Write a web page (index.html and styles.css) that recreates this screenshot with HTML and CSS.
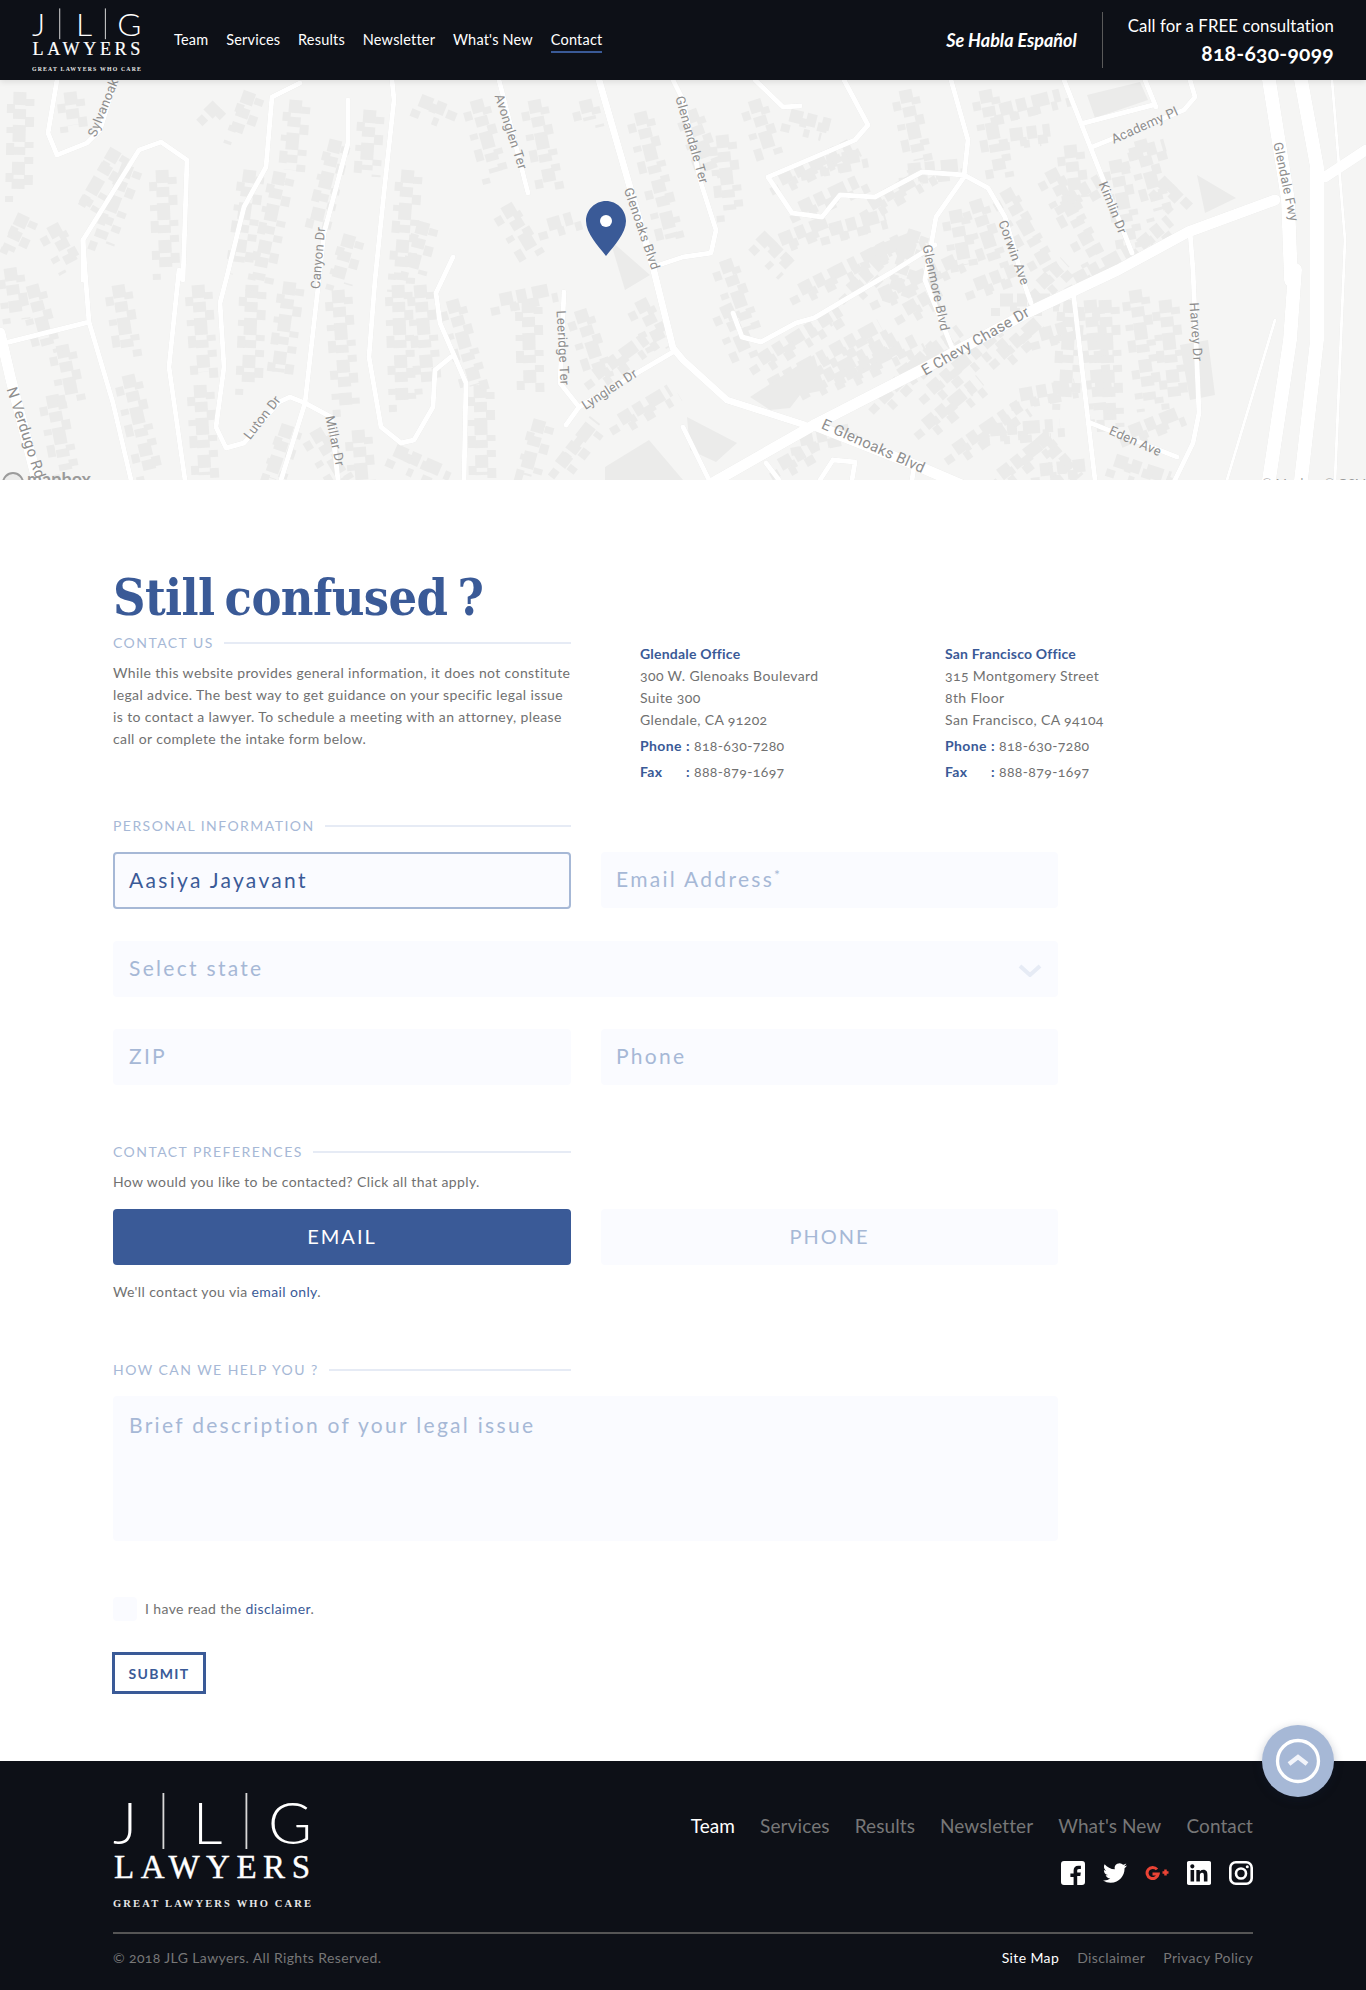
FILE: index.html
```html
<!DOCTYPE html>
<html lang="en">
<head>
<meta charset="utf-8">
<title>Contact | JLG Lawyers</title>
<link rel="stylesheet" href="styles.css">
</head>
<body>
<header class="site-header">
  <a class="header-logo" href="#">
    <svg class="logo-small" viewBox="0 -8 200 126">
      <text class="logo-mark" x="0" y="51">J</text>
      <rect class="logo-bar" x="49.500" y="0" width="1.800" height="56"/>
      <text class="logo-mark" x="80" y="51">L</text>
      <rect class="logo-bar" x="132.500" y="0" width="1.800" height="56"/>
      <text class="logo-mark" x="155" y="51" textLength="44" lengthAdjust="spacingAndGlyphs">G</text>
      <text class="logo-word" x="1" y="85" textLength="196">LAWYERS</text>
      <text class="logo-tag" x="0" y="114" textLength="198">GREAT LAWYERS WHO CARE</text>
    </svg>
  </a>
  <nav class="main-nav">
    <a href="#">Team</a>
    <a href="#">Services</a>
    <a href="#">Results</a>
    <a href="#">Newsletter</a>
    <a href="#">What's New</a>
    <a href="#" class="active">Contact</a>
  </nav>
  <div class="header-right">
    <span class="habla">Se Habla Español</span>
    <div class="call">
      <span class="call-text">Call for a FREE consultation</span>
      <strong class="call-phone">818-630-9099</strong>
    </div>
  </div>
</header>

<section class="map">
  <svg class="map-svg" viewBox="0 80 1366 400" width="1366" height="400">
    <g class="blds">
      <g id="rows">
        <path d="M20 92L18 190M70 92L74 125M116 150L84 205M24 215L8 250M52 225L72 262M10 268L16 312M128 165L100 238M162 170L166 270M208 105L218 115M250 92L236 132M250 170L238 262M296 100L290 170M280 172L258 280M336 140L316 222M350 235L338 278M370 110L366 170M420 100L450 112M408 170L400 280M424 222L412 268M476 100L496 172M534 100L550 182M506 205L534 252M548 225L572 218M640 112L672 238M585 100L590 120"/>
        <path d="M32 285L48 345M62 345L72 395M118 285L128 350M128 375L150 470M52 395L66 470M198 285L204 372M200 385L205 475M252 285L248 385M290 282L278 372M288 425L270 478M315 430L345 480M338 290L346 405M358 430L362 480M398 285L402 400M420 285L428 385M452 300L476 385M480 385L482 475M395 450L440 470M500 300L548 290M528 300L530 385M580 310L600 370M595 375L650 335M640 300L660 340M540 420L525 475M560 465L595 420M620 420L670 390"/>
        <path d="M690 110L712 170M722 135L730 210M754 100L770 150M790 115L830 125M780 180L850 145M810 165L862 155M905 90L920 160M908 170L960 165M800 208L860 180M870 205L930 170M760 235L790 265M725 260L750 330M780 240L830 220M830 230L885 215M800 290L900 240M870 255L920 235M895 290L915 230M850 290L880 262"/>
        <path d="M985 90L1000 170M1000 110L1060 95M1010 135L1050 130M1005 190L1050 270M1050 170L1095 255M1070 145L1075 190M955 210L965 265M975 200L995 260M1065 200L1100 180M1130 155L1165 145M1115 160L1130 240M1140 140L1160 210M1160 180L1180 200M1075 280L1130 250M1140 245L1170 220"/>
        <path d="M725 305L745 350M760 360L840 310M770 385L880 325M880 295L955 260M810 385L900 335M905 310L940 290M845 375L915 340M900 375L960 330M975 285L1015 270M1000 300L1060 300M1040 285L1065 262M1090 300L1100 410M1105 300L1110 420M1135 290L1150 400M1165 300L1175 400"/>
        <path d="M880 400L935 345M930 390L1000 330M955 450L1020 405M1000 355L1040 320M1020 395L1075 385M1040 335L1075 325M1070 300L1065 400M990 430L1060 425M1000 475L1045 440M1040 435L1070 470M1130 432L1180 412M1115 460L1170 478M800 440L850 430M780 465L815 445M925 425L980 380M1040 470L1085 465"/>
      </g>
      <use class="rows-b" href="#rows" x="10" y="7"/>
      <use class="rows-c" href="#rows" x="-9" y="12"/>
    </g>
    <path class="bld-block" d="M1087 95L1140 82L1148 100L1095 118ZM1197 175L1236 198L1205 213ZM750 397L814 355L825 390L800 395L790 408L770 410ZM687 417L737 443L716 462L690 450ZM605 467L649 440L683 480L605 480ZM1180 345L1208 340L1215 395L1190 400ZM610 240L650 275L625 290Z"/>
    <g class="roads">
      <path d="M57 80L48 133L57 155L87 143L100 130L115 82"/>
      <path d="M83 280V240L139 150L161 142L187 160L183 280L179 270L169 367L185 480"/>
      <path d="M83 240L85 270L89 322L113 403L131 480M89 322L9 342"/>
      <path d="M300 83L272 97L266 167L244 207L226 280L220 303L224 367L216 427L226 448L244 443L279 402L290 397L305 403L331 417L338 480"/>
      <path d="M348 100V143L324 233L320 270L305 403L281 480"/>
      <path d="M392 80L394 100L385 183L375 280L369 357L381 427L401 443L414 440L433 407L435 370L451 357"/>
      <path d="M453 257L436 293L440 323L466 383L464 480"/>
      <path d="M499 80L528 193M564 292L560 383L579 407L566 425M579 407L673 352"/>
      <path class="road-mid" d="M599 80L653 267L673 348L683 360L727 400L805 425"/>
      <path d="M653 267L683 257L711 253L716 230L700 180L683 100L673 80"/>
      <path d="M755 80L783 107L800 106M844 80L868 125L855 140L768 177L792 213L822 217L840 195L875 197L922 172L964 175L988 188L1005 217L1023 280L1031 303M951 80L968 140L964 177L936 217L925 280L953 350"/>
      <path d="M733 313L742 337L761 342L796 323L814 318L892 272L935 245M1064 80L1132 253M1092 147L1184 110L1195 97L1190 80M1084 123L1153 105M1145 80L1156 107"/>
      <path d="M1073 290L1088 420L1095 480M1088 422L1177 457M1190 232L1193 270L1199 413L1193 443L1175 480M683 427L709 480M766 463L779 480M833 460L855 462L852 480M820 480L833 460M914 467L912 480"/>
      <path class="road-wide" d="M700 490L814 425L927 367L1027 313L1118 270L1188 232L1275 200M1325 177L1366 150"/>
      <path class="road-wide" d="M0 333L11 380L37 480M814 425L920 467L962 485"/>
      <path class="road-fwy" d="M1269 80L1288 200L1291 280L1295 270L1290 340L1269 480"/>
      <path class="road-fwy" d="M1301 80L1317 167V340L1301 480"/>
      <path class="road-thin" d="M1332 80L1345 240L1335 480M1275 320L1227 480"/>
    </g>
    <g class="map-labels">
      <text transform="translate(104 108) rotate(-68)">Sylvanoak</text>
      <text transform="translate(510 132) rotate(72)">Avonglen Ter</text>
      <text transform="translate(319 258) rotate(-85)">Canyon Dr</text>
      <text transform="translate(641 229) rotate(71)">Glenoaks Blvd</text>
      <text transform="translate(691 140) rotate(74)">Glenandale Ter</text>
      <text transform="translate(1145 126) rotate(-24)">Academy Pl</text>
      <text transform="translate(1112 208) rotate(68)">Kimlin Dr</text>
      <text transform="translate(1013 253) rotate(70)">Corwin Ave</text>
      <text transform="translate(935 288) rotate(78)">Glenmore Blvd</text>
      <text transform="translate(1285 182) rotate(78)">Glendale Fwy</text>
      <text class="label-lg" transform="translate(976 342) rotate(-30)">E Chevy Chase Dr</text>
      <text class="label-lg" transform="translate(873 447) rotate(24)">E Glenoaks Blvd</text>
      <text transform="translate(1195 332) rotate(86)">Harvey Dr</text>
      <text transform="translate(1135 442) rotate(24)">Eden Ave</text>
      <text transform="translate(263 418) rotate(-52)">Luton Dr</text>
      <text transform="translate(334 441) rotate(78)">Millar Dr</text>
      <text transform="translate(562 348) rotate(87)">Leeridge Ter</text>
      <text transform="translate(610 390) rotate(-33)">Lynglen Dr</text>
      <text class="label-lg" transform="translate(25 433) rotate(72)">N Verdugo Rd</text>
    </g>
    <circle class="mapbox-ring" cx="13" cy="483" r="10"/>
    <text class="mapbox-word" x="27" y="486">mapbox</text>
    <text class="map-credit" x="1262" y="487">© Mapbox © OSM</text>
    <path class="map-pin" d="M606 201C617 201 626 210 626 221C626 233 614 246 606 256C598 246 586 233 586 221C586 210 595 201 606 201Z"/>
    <circle class="map-pin-dot" cx="606" cy="221" r="6"/>
  </svg>
</section>

<main class="content">
  <h1 class="page-title">Still confused ?</h1>

  <div class="intro">
    <div class="intro-text">
      <h2 class="section-label"><span>CONTACT US</span></h2>
      <p class="lead">While this website provides general information, it does not constitute legal advice. The best way to get guidance on your specific legal issue is to contact a lawyer. To schedule a meeting with an attorney, please call or complete the intake form below.</p>
    </div>
    <address class="office">
      <h3>Glendale Office</h3>
      <p>300 W. Glenoaks Boulevard</p>
      <p>Suite 300</p>
      <p>Glendale, CA 91202</p>
      <p class="office-line"><span class="office-key">Phone</span><b>:</b> 818-630-7280</p>
      <p class="office-line"><span class="office-key">Fax</span><b>:</b> 888-879-1697</p>
    </address>
    <address class="office">
      <h3>San Francisco Office</h3>
      <p>315 Montgomery Street</p>
      <p>8th Floor</p>
      <p>San Francisco, CA 94104</p>
      <p class="office-line"><span class="office-key">Phone</span><b>:</b> 818-630-7280</p>
      <p class="office-line"><span class="office-key">Fax</span><b>:</b> 888-879-1697</p>
    </address>
  </div>

  <form class="intake">
    <h2 class="section-label half"><span>PERSONAL INFORMATION</span></h2>
    <div class="field-grid">
      <div class="field filled">Aasiya Jayavant</div>
      <div class="field">Email Address<sup>*</sup></div>
      <div class="field wide">Select state
        <svg class="chevron" width="24" height="13" viewBox="0 0 24 13"><path d="M2 2L12 11L22 2"/></svg>
      </div>
      <div class="field">ZIP</div>
      <div class="field">Phone</div>
    </div>

    <h2 class="section-label half group"><span>CONTACT PREFERENCES</span></h2>
    <p class="help">How would you like to be contacted? Click all that apply.</p>
    <div class="choice-grid">
      <div class="choice selected">EMAIL</div>
      <div class="choice">PHONE</div>
    </div>
    <p class="note">We'll contact you via <a href="#">email only</a>.</p>

    <h2 class="section-label half group"><span>HOW CAN WE HELP YOU ?</span></h2>
    <div class="field message">Brief description of your legal issue</div>

    <label class="agree"><span class="box"></span><span>I have read the <a href="#">disclaimer</a>.</span></label>
    <button class="submit" type="button">SUBMIT</button>
  </form>
</main>

<footer class="site-footer">
  <a class="to-top" href="#">
    <svg width="48" height="48" viewBox="0 0 48 48"><circle class="top-ring" cx="24" cy="24" r="20.500"/><path class="top-chev" d="M15 27L24 20L33 27"/></svg>
  </a>
  <div class="footer-top">
    <svg class="logo-large" viewBox="0 -8 200 126">
      <text class="logo-mark" x="0" y="51">J</text>
      <rect class="logo-bar" x="49.500" y="0" width="1.800" height="56"/>
      <text class="logo-mark" x="80" y="51">L</text>
      <rect class="logo-bar" x="132.500" y="0" width="1.800" height="56"/>
      <text class="logo-mark" x="155" y="51" textLength="44" lengthAdjust="spacingAndGlyphs">G</text>
      <text class="logo-word" x="1" y="85" textLength="196">LAWYERS</text>
      <text class="logo-tag" x="0" y="114" textLength="198">GREAT LAWYERS WHO CARE</text>
    </svg>
    <div class="footer-links">
      <nav class="footer-nav">
        <a href="#" class="current">Team</a>
        <a href="#">Services</a>
        <a href="#">Results</a>
        <a href="#">Newsletter</a>
        <a href="#">What's New</a>
        <a href="#">Contact</a>
      </nav>
      <div class="social">
        <svg viewBox="0 0 24 24" width="24" height="24"><path class="ico" d="M3 0h18a3 3 0 0 1 3 3v18a3 3 0 0 1-3 3h-4.800v-9h3.100l.5-3.600h-3.600V9.800c0-1 .3-1.800 1.800-1.800h1.900V4.800c-.3 0-1.500-.1-2.700-.1-2.700 0-4.600 1.700-4.600 4.700v3H9.400V16h3.200v8H3a3 3 0 0 1-3-3V3a3 3 0 0 1 3-3z"/></svg>
        <svg viewBox="0 0 24 24" width="24" height="24"><path class="ico" d="M23.953 4.570a10 10 0 01-2.825.775 4.958 4.958 0 002.163-2.723c-.951.555-2.005.959-3.127 1.184a4.920 4.920 0 00-8.384 4.482C7.690 8.095 4.067 6.130 1.640 3.162a4.822 4.822 0 00-.666 2.475c0 1.710.870 3.213 2.188 4.096a4.904 4.904 0 01-2.228-.616v.060a4.923 4.923 0 003.946 4.827 4.996 4.996 0 01-2.212.085 4.936 4.936 0 004.604 3.417 9.867 9.867 0 01-6.102 2.105c-.390 0-.779-.023-1.170-.067a13.995 13.995 0 007.557 2.209c9.053 0 13.998-7.496 13.998-13.985 0-.210 0-.420-.015-.630A9.935 9.935 0 0024 4.590z"/></svg>
        <svg viewBox="0 0 24 24" width="24" height="24"><path class="gplus" d="M12 8.400A5.600 5.600 0 1 0 13.200 13H7.500"/><path class="gplus-plus" d="M20.500 8.500v6M17.500 11.500h6"/></svg>
        <svg viewBox="0 0 24 24" width="24" height="24"><path class="ico" d="M20.447 20.452h-3.554v-5.569c0-1.328-.027-3.037-1.852-3.037-1.853 0-2.136 1.445-2.136 2.939v5.667H9.351V9h3.414v1.561h.046c.477-.9 1.637-1.850 3.370-1.850 3.601 0 4.267 2.370 4.267 5.455v6.286zM5.337 7.433c-1.144 0-2.063-.926-2.063-2.065 0-1.138.92-2.063 2.063-2.063 1.140 0 2.064.925 2.064 2.063 0 1.139-.925 2.065-2.064 2.065zm1.782 13.019H3.555V9h3.564v11.452zM22.225 0H1.771C.792 0 0 .774 0 1.729v20.542C0 23.227.792 24 1.771 24h20.451C23.200 24 24 23.227 24 22.271V1.729C24 .774 23.200 0 22.222 0h.003z"/></svg>
        <svg viewBox="0 0 24 24" width="24" height="24"><rect class="insta" x="1.300" y="1.300" width="21.400" height="21.400" rx="5.500"/><circle class="insta" cx="12" cy="12.500" r="5"/><circle class="ico" cx="18.300" cy="5.700" r="1.500"/></svg>
      </div>
    </div>
  </div>
  <div class="footer-bottom">
    <span class="copyright">© 2018 JLG Lawyers. All Rights Reserved.</span>
    <nav class="legal">
      <a href="#" class="current">Site Map</a>
      <a href="#">Disclaimer</a>
      <a href="#">Privacy Policy</a>
    </nav>
  </div>
</footer>
</body>
</html>
```
FILE: styles.css
```css
* { box-sizing: border-box; }
html, body { margin: 0; padding: 0; }
body {
  background: #fff;
  color: #717171;
  font-family: "Lato", "Open Sans", sans-serif;
  font-size: 14px;
  letter-spacing: .38px;
  line-height: 22px;
  font-variant-numeric: oldstyle-nums;
  font-feature-settings: "onum" 1;
}
a { color: inherit; text-decoration: none; }
h1, h2, h3, p, address { margin: 0; font-style: normal; }

/* logo */
.logo-mark { fill: #fff; font-family: "Lato", sans-serif; font-weight: 300; font-size: 58px; letter-spacing: 0; }
.logo-bar { fill: #d8d8d8; }
.logo-word { fill: #fff; stroke: #fff; stroke-width: .4px; font-family: "Liberation Serif", serif; font-size: 33px; letter-spacing: 0; }
.logo-tag { fill: #e8e8e8; font-family: "Liberation Serif", serif; font-weight: 700; font-size: 10.500px; letter-spacing: 0; }

/* header */
.site-header {
  position: relative;
  z-index: 2;
  display: flex;
  align-items: center;
  height: 80px;
  padding: 0 32px;
  background: #0d1017;
  box-shadow: 0 2px 6px rgba(0, 0, 0, .1);
  color: #fff;
}
.header-logo { display: block; height: 69px; margin-top: -3px; }
.logo-small { display: block; width: 110px; height: 69.300px; }
.main-nav { display: flex; gap: 17.800px; margin: 2px 0 0 32px; }
.main-nav a {
  padding: 0 0 2px;
  font-size: 14.500px;
  letter-spacing: .2px;
  line-height: 22px;
}
.main-nav .active { border-bottom: 2px solid #3a5a97; padding-bottom: 0; }
.header-right { display: flex; align-items: center; margin-left: auto; }
.habla { padding-right: 25px; font-size: 18px; font-style: italic; font-weight: 700; letter-spacing: 0; }
.call {
  display: flex;
  flex-direction: column;
  align-items: flex-end;
  height: 56px;
  padding-left: 25px;
  border-left: 1.500px solid #5a5a5a;
}
.call-text { font-size: 16.750px; line-height: 28px; letter-spacing: .1px; }
.call-phone { font-size: 21px; font-weight: 700; line-height: 26px; letter-spacing: .3px; }

/* map */
.map { height: 400px; overflow: hidden; background: #f5f5f4; }
.map-svg { display: block; }
.blds { fill: none; stroke: #ebebea; stroke-width: 13; stroke-dasharray: 13 4 10 6 17 5 8 7; filter: blur(.5px); }
.rows-b { stroke-width: 9; stroke-dasharray: 7 11 10 15 6 9; }
.rows-c { stroke-width: 8; stroke-dasharray: 9 14 6 10 12 18; }
.bld-block { fill: #ebebea; }
.roads { filter: drop-shadow(0 0 .7px #dcdcda); }
.roads path { fill: none; stroke: #fff; stroke-width: 5; stroke-linecap: round; stroke-linejoin: round; }
.roads .road-mid { stroke-width: 7; }
.roads .road-wide { stroke-width: 11; }
.roads .road-fwy { stroke-width: 14; }
.roads .road-thin { stroke-width: 3; }
.map-labels text { fill: #8e8e8e; font-family: "Roboto", sans-serif; font-size: 13px; letter-spacing: .3px; text-anchor: middle; dominant-baseline: middle; }
.map-labels .label-lg { font-size: 15px; }
.mapbox-ring { fill: #ebebea; stroke: #9b9b9b; stroke-width: 2; }
.mapbox-word { fill: #9b9b9b; font-family: "Lato", sans-serif; font-weight: 700; font-size: 18px; letter-spacing: 0; }
.map-credit { fill: #9b9b9b; font-size: 12px; }
.map-pin { fill: #3a5a97; }
.map-pin-dot { fill: #fff; }

/* content */
.content { padding: 88px 113px 67px; }
.page-title {
  height: 65px;
  color: #3a5a97;
  font-family: "DejaVu Serif", serif;
  font-stretch: condensed;
  font-size: 50px;
  font-weight: 700;
  letter-spacing: -.6px;
  word-spacing: -5px;
  line-height: 60px;
}
.section-label {
  display: flex;
  align-items: center;
  gap: 10px;
  color: #a6b8d6;
  font-size: 14px;
  font-weight: 400;
  letter-spacing: 1.450px;
  line-height: 20px;
}
.section-label::after { content: ""; flex: 1; height: 2px; background: #e6ebf5; }
.section-label.half { width: 458px; }
.section-label.group { margin-top: 57px; }

.intro { display: grid; grid-template-columns: 458px 374px 1fr; height: 183px; }
.lead { margin-top: 9px; }
.office { padding-top: 10px; }
.intro .office:nth-child(2) { margin-left: 69px; }
.office h3 { color: #3a5a97; font-size: 14px; font-weight: 700; line-height: 22px; letter-spacing: .2px; }
.office-key, .office b { color: #3a5a97; font-weight: 700; }
.office-key { display: inline-block; width: 46px; }
.office-line { margin-top: 4px; }

.field-grid { display: grid; grid-template-columns: 458px 457px; gap: 32px 30px; margin-top: 16px; }
.field {
  position: relative;
  display: flex;
  align-items: center;
  height: 56px;
  padding: 0 15px 2px;
  border-radius: 4px;
  background: #fafbff;
  color: #a6b8d6;
  font-size: 21px;
  letter-spacing: 2.300px;
}
.field.wide, .field:nth-child(4), .message { padding-left: 16px; }
.field sup { align-self: flex-start; margin-top: 16px; font-size: 14px; line-height: 1; }
.field.filled { height: 57px; padding: 0 14px 2px; border: 2px solid #a6b8d6; color: #3a5a97; }
.field.wide { grid-column: 1 / -1; }
.chevron { position: absolute; right: 16px; top: 23px; }
.chevron path { fill: none; stroke: #e6ebf5; stroke-width: 4; }

.help { margin-top: 9px; }
.choice-grid { display: grid; grid-template-columns: 458px 457px; gap: 30px; margin-top: 16px; }
.choice {
  display: flex;
  align-items: center;
  justify-content: center;
  height: 56px;
  padding-bottom: 2px;
  border-radius: 4px;
  background: #fafbff;
  color: #a6b8d6;
  font-size: 20px;
  letter-spacing: 2px;
}
.choice.selected { background: #3a5a97; color: #fff; }
.note { margin-top: 16px; }
.note a, .agree a { color: #3a5a97; }
.message { align-items: flex-start; width: 945px; height: 145px; margin-top: 16px; padding-top: 17px; line-height: 24px; }
.agree { display: flex; align-items: center; gap: 8px; height: 24px; margin-top: 56px; }
.box { width: 24px; height: 24px; border-radius: 4px; background: #fafbff; }
.submit {
  display: block;
  width: 94px;
  height: 42px;
  margin: 31px 0 0 -1px;
  padding: 0;
  border: 3px solid #3a5a97;
  background: #fff;
  color: #3a5a97;
  font-family: inherit;
  font-size: 14px;
  font-weight: 700;
  letter-spacing: 1.300px;
}

/* footer */
.site-footer {
  position: relative;
  height: 229px;
  padding: 32px 113px 0;
  background: #0d1017;
  color: #777;
}
.to-top {
  position: absolute;
  top: -36px;
  right: 32px;
  display: flex;
  align-items: center;
  justify-content: center;
  width: 72px;
  height: 72px;
  border-radius: 50%;
  background: #a6b8d6;
  box-shadow: 0 3px 10px rgba(20, 30, 60, .25);
}
.top-ring { fill: none; stroke: #fff; stroke-width: 3.300; }
.top-chev { fill: none; stroke: #f2f4fa; stroke-width: 4.500; }
.footer-top {
  display: flex;
  justify-content: space-between;
  height: 141px;
  border-bottom: 2px solid #555;
}
.logo-large { display: block; width: 200px; height: 126px; margin-top: -8px; }
.footer-links { display: flex; flex-direction: column; align-items: flex-end; gap: 23px; padding-top: 21px; }
.footer-nav { display: flex; gap: 25px; font-size: 19px; letter-spacing: .1px; line-height: 24px; }
.current { color: #fff; }
.social { display: flex; gap: 18px; }
.ico { fill: #fff; }
.gplus { fill: none; stroke: #ea4335; stroke-width: 3; }
.gplus-plus { fill: none; stroke: #ea4335; stroke-width: 2.500; }
.insta { fill: none; stroke: #fff; stroke-width: 2.600; }
.footer-bottom { display: flex; justify-content: space-between; margin-top: 13px; }
.legal { display: flex; gap: 18px; }
```
